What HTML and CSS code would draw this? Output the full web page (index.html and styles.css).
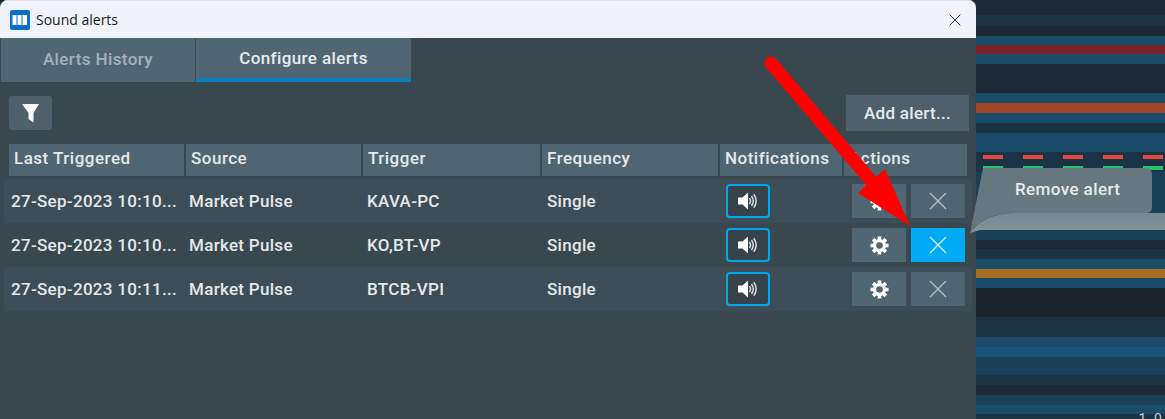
FILE: index.html
```html
<!DOCTYPE html>
<html lang="en">
<head>
<meta charset="utf-8">
<title>Sound alerts</title>
<link rel="stylesheet" href="styles.css">
</head>
<body>
<svg class="defs" width="0" height="0" aria-hidden="true">
  <defs>
    <symbol id="speaker" viewBox="0 0 20 18">
      <path d="M0 5.500h4.500L10 .5v17l-5.500-5H0z" fill="#fff"/>
      <path d="M11.500 6q2 3 0 6M13.500 4q3.500 5 0 10M15.800 2.300q4.800 6.700 0 13.400" fill="none" stroke="#d5dadd" stroke-width="1.500"/>
    </symbol>
    <symbol id="gear" viewBox="0 0 20 20">
      <g stroke="#fff" stroke-width="3.800">
        <path d="M10 .5v5M10 14.500v5M.5 10h5M14.500 10h5M3.300 3.300l3.500 3.500M13.200 13.200l3.500 3.500M16.700 3.300l-3.500 3.500M6.800 13.200l-3.500 3.500"/>
      </g>
      <circle cx="10" cy="10" r="5.200" fill="none" stroke="#fff" stroke-width="3.400"/>
    </symbol>
    <symbol id="cross" viewBox="0 0 18 18">
      <path d="M1 1l16 16M17 1L1 17" fill="none" stroke="currentColor" stroke-width="1.300"/>
    </symbol>
  </defs>
</svg>
<div class="stage">
  <main class="window">
    <header class="titlebar">
      <svg class="app-icon" viewBox="0 0 20 20" aria-hidden="true">
        <rect width="20" height="20" rx="2" fill="#0b6fc9"/>
        <path d="M2.500 5h4v10h-4zM7.500 5h4v10h-4zM12.500 5h4.500v10h-4.500z" fill="#fff"/>
      </svg>
      <span class="title">Sound alerts</span>
      <svg class="close" viewBox="0 0 18 18" aria-hidden="true"><use href="#cross"/></svg>
    </header>
    <nav class="tabs">
      <div class="tab">Alerts History</div>
      <div class="tab tab-active">Configure alerts</div>
    </nav>
    <div class="toolbar">
      <button class="filter" aria-label="Filter">
        <svg viewBox="0 0 17 19" aria-hidden="true"><path d="M0 0h17l-5.500 9v9.500l-5-3.500V9z" fill="#fff"/></svg>
      </button>
      <button class="add">Add alert...</button>
    </div>
    <div class="grid head">
      <div>Last Triggered</div><div>Source</div><div>Trigger</div><div>Frequency</div><div>Notifications</div><div>Actions</div>
    </div>
    <div class="rows">
      <div class="grid row">
        <div>27-Sep-2023 10:10...</div><div>Market Pulse</div><div>KAVA-PC</div><div>Single</div>
        <div><button class="sound"><svg viewBox="0 0 20 18"><use href="#speaker"/></svg></button></div>
        <div class="actions">
          <button class="act"><svg class="ico-gear" viewBox="0 0 20 20"><use href="#gear"/></svg></button>
          <button class="act"><svg class="ico-x" viewBox="0 0 18 18"><use href="#cross"/></svg></button>
        </div>
      </div>
      <div class="grid row">
        <div>27-Sep-2023 10:10...</div><div>Market Pulse</div><div>KO,BT-VP</div><div>Single</div>
        <div><button class="sound"><svg viewBox="0 0 20 18"><use href="#speaker"/></svg></button></div>
        <div class="actions">
          <button class="act"><svg class="ico-gear" viewBox="0 0 20 20"><use href="#gear"/></svg></button>
          <button class="act act-hot"><svg class="ico-x" viewBox="0 0 18 18"><use href="#cross"/></svg></button>
        </div>
      </div>
      <div class="grid row">
        <div>27-Sep-2023 10:11...</div><div>Market Pulse</div><div>BTCB-VPI</div><div>Single</div>
        <div><button class="sound"><svg viewBox="0 0 20 18"><use href="#speaker"/></svg></button></div>
        <div class="actions">
          <button class="act"><svg class="ico-gear" viewBox="0 0 20 20"><use href="#gear"/></svg></button>
          <button class="act"><svg class="ico-x" viewBox="0 0 18 18"><use href="#cross"/></svg></button>
        </div>
      </div>
    </div>
  </main>
  <aside class="chart">
    <i class="dark"></i><i class="teal"></i><i class="dark"></i><i class="blue"></i><i class="red"></i><i class="blue"></i>
    <i class="dark"></i><i class="blue"></i><i class="orange"></i><i class="blue"></i><i class="teal"></i><i class="blue"></i>
    <i class="levels"></i><i class="mid"></i>
    <i class="mid"></i><i class="dark"></i><i class="teal"></i><i class="blue"></i><i class="amber"></i><i class="blue"></i>
    <i class="black"></i><i class="teal"></i><i class="blue"></i><i class="bright"></i><i class="mid"></i><i class="teal"></i>
    <i class="dark"></i><i class="mid"></i><i class="blue"></i><i class="teal"></i>
    <span class="axis">1.0</span>
  </aside>
  <div class="tooltip">
    <svg class="bubble" viewBox="0 0 195 66" aria-hidden="true">
      <defs>
        <linearGradient id="band" x1="0" x2="0" y1="0" y2="1">
          <stop offset="0" stop-color="#75878f"/>
          <stop offset="1" stop-color="#84969d"/>
        </linearGradient>
      </defs>
      <path d="M0 66C8 54 24 46 44 46H195V63H10z" fill="url(#band)"/>
      <path d="M13 1H176q6 0 6 6V40q0 6-6 6H44C24 46 8 54 0 66z" fill="#66777f"/>
    </svg>
    <span class="tip-text">Remove alert</span>
  </div>
  <svg class="arrow" viewBox="0 0 1165 419" aria-hidden="true">
    <path d="M771 63L873 183" stroke="#f00" stroke-width="13" stroke-linecap="round" fill="none"/>
    <path d="M910 226L885 169L858 193z" fill="#f00"/>
  </svg>
</div>
</body>
</html>
```
FILE: styles.css
```css
* { box-sizing: border-box; }
html, body { margin: 0; height: 100%; overflow: hidden; }
body { font-family: Roboto, "Liberation Sans", sans-serif; background: #1c2830; }
.defs { position: absolute; }
button { border: 0; padding: 0; font: inherit; color: inherit; }

.stage { position: relative; display: flex; width: 1165px; height: 419px; overflow: hidden; background: #1c2830; }

.window { width: 976px; flex: none; display: flex; flex-direction: column; background: #39474f; border-radius: 8px 8px 0 0; overflow: hidden; box-shadow: 1px 0 0 #44535b; }
.titlebar { height: 38px; flex: none; display: flex; align-items: center; padding: 0 15px 0 10px; background: #f0f3f9; border-top: 1px solid #e4e6ea; color: #1a1a1a; }
.app-icon { width: 20px; height: 20px; flex: none; }
.title { margin-left: 6px; font: 14px/1 "Open Sans", sans-serif; }
.close { width: 12px; height: 12px; margin-left: auto; color: #111; }

.tabs { display: flex; gap: 1px; padding-left: 1px; height: 44px; flex: none; }
.tab { width: 194px; display: flex; align-items: center; justify-content: center; padding-bottom: 2px; background: #506672; color: #a3b2ba; font-size: 17px; font-weight: 500; letter-spacing: .4px; }
.tab-active { width: 215px; color: #e6ebee; border-bottom: 4px solid #0a80c0; padding-bottom: 0; }

.toolbar { display: flex; justify-content: space-between; align-items: flex-start; padding: 13px 7px 0 9px; height: 62px; flex: none; }
.filter { width: 43px; height: 34px; margin-top: 1px; display: flex; align-items: center; justify-content: center; background: #4d606b; border-radius: 3px; }
.filter svg { width: 17px; height: 19px; }
.add { width: 123px; height: 36px; background: #4d606b; color: #e6ebee; font-size: 17px; font-weight: 500; letter-spacing: .3px; }

.grid { display: grid; grid-template-columns: 175px 175px 177px 176px 122px 123px; column-gap: 2px; padding-left: 9px; font-weight: 500; font-size: 17px; color: #e4e9ec; }
.head { height: 32px; flex: none; margin-bottom: 3px; letter-spacing: .5px; }
.head > div { background: #4f6571; padding-left: 5px; line-height: 29px; }

.rows { display: flex; flex-direction: column; margin: 0 4px; }
.row { height: 44px; margin-left: -4px; margin-right: -4px; padding-left: 11px; column-gap: 2px; grid-template-columns: 176px 176px 178px 177px 124px 120px; align-items: center; letter-spacing: .3px; }
.row:nth-child(odd) { background: linear-gradient(#3d4d57, #3d4d57) 4px 0 / 968px 100% no-repeat; }
.row > div { white-space: nowrap; }
.sound { display: flex; align-items: center; justify-content: center; width: 44px; height: 34px; background: #36434b; border: 2px solid #00a8f0; border-radius: 4px; }
.sound svg { width: 20px; height: 18px; }
.actions { display: flex; gap: 5px; }
.act { width: 54px; height: 34px; flex: none; display: flex; align-items: center; justify-content: center; background: #506672; color: #b5c0c6; }
.act-hot { background: #00aaf5; color: #d8f2ff; }
.ico-gear { width: 19px; height: 19px; }
.ico-x { width: 18px; height: 18px; }

.chart { flex: 1; display: grid; grid-template-rows: 15px 11px 10px 9px 9px 10px 29px 10px 10px 10px 10px 19px 20px 58px 10px 9px 10px 10px 9px 10px 29px 20px 10px 10px 18px 10px 10px 10px 9px 5px; }
.chart i { display: block; }
.dark { background: #1c2932; }
.teal { background: #1a3241; }
.black { background: #1c2429; }
.blue { background: #1a4c6a; }
.bright { background: #1a5578; }
.mid { background: #1a4058; }
.red { background: #7a2228; }
.orange { background: #a04626; }
.amber { background: #a56c25; }
.levels {
  background-color: #193345;
  background-image:
    repeating-linear-gradient(90deg, transparent 0 7px, #e8483a 7px 27px, transparent 27px 40px),
    repeating-linear-gradient(90deg, transparent 0 7px, #22c66a 7px 27px, transparent 27px 40px);
  background-size: 100% 4px, 100% 4px;
  background-position: 0 3px, 0 14px;
  background-repeat: no-repeat;
}
.axis { position: absolute; right: 1px; bottom: -8px; font-size: 14px; color: #c5ced3; letter-spacing: 2px; }

.tooltip { position: absolute; left: 970px; top: 167px; width: 195px; height: 66px; }
.bubble { display: block; width: 195px; height: 66px; }
.tip-text { position: absolute; left: 45px; top: 12px; color: #e6ebee; font-size: 17px; font-weight: 500; letter-spacing: .4px; line-height: 20px; white-space: nowrap; }

.arrow { position: absolute; inset: 0; width: 1165px; height: 419px; pointer-events: none; }
```
